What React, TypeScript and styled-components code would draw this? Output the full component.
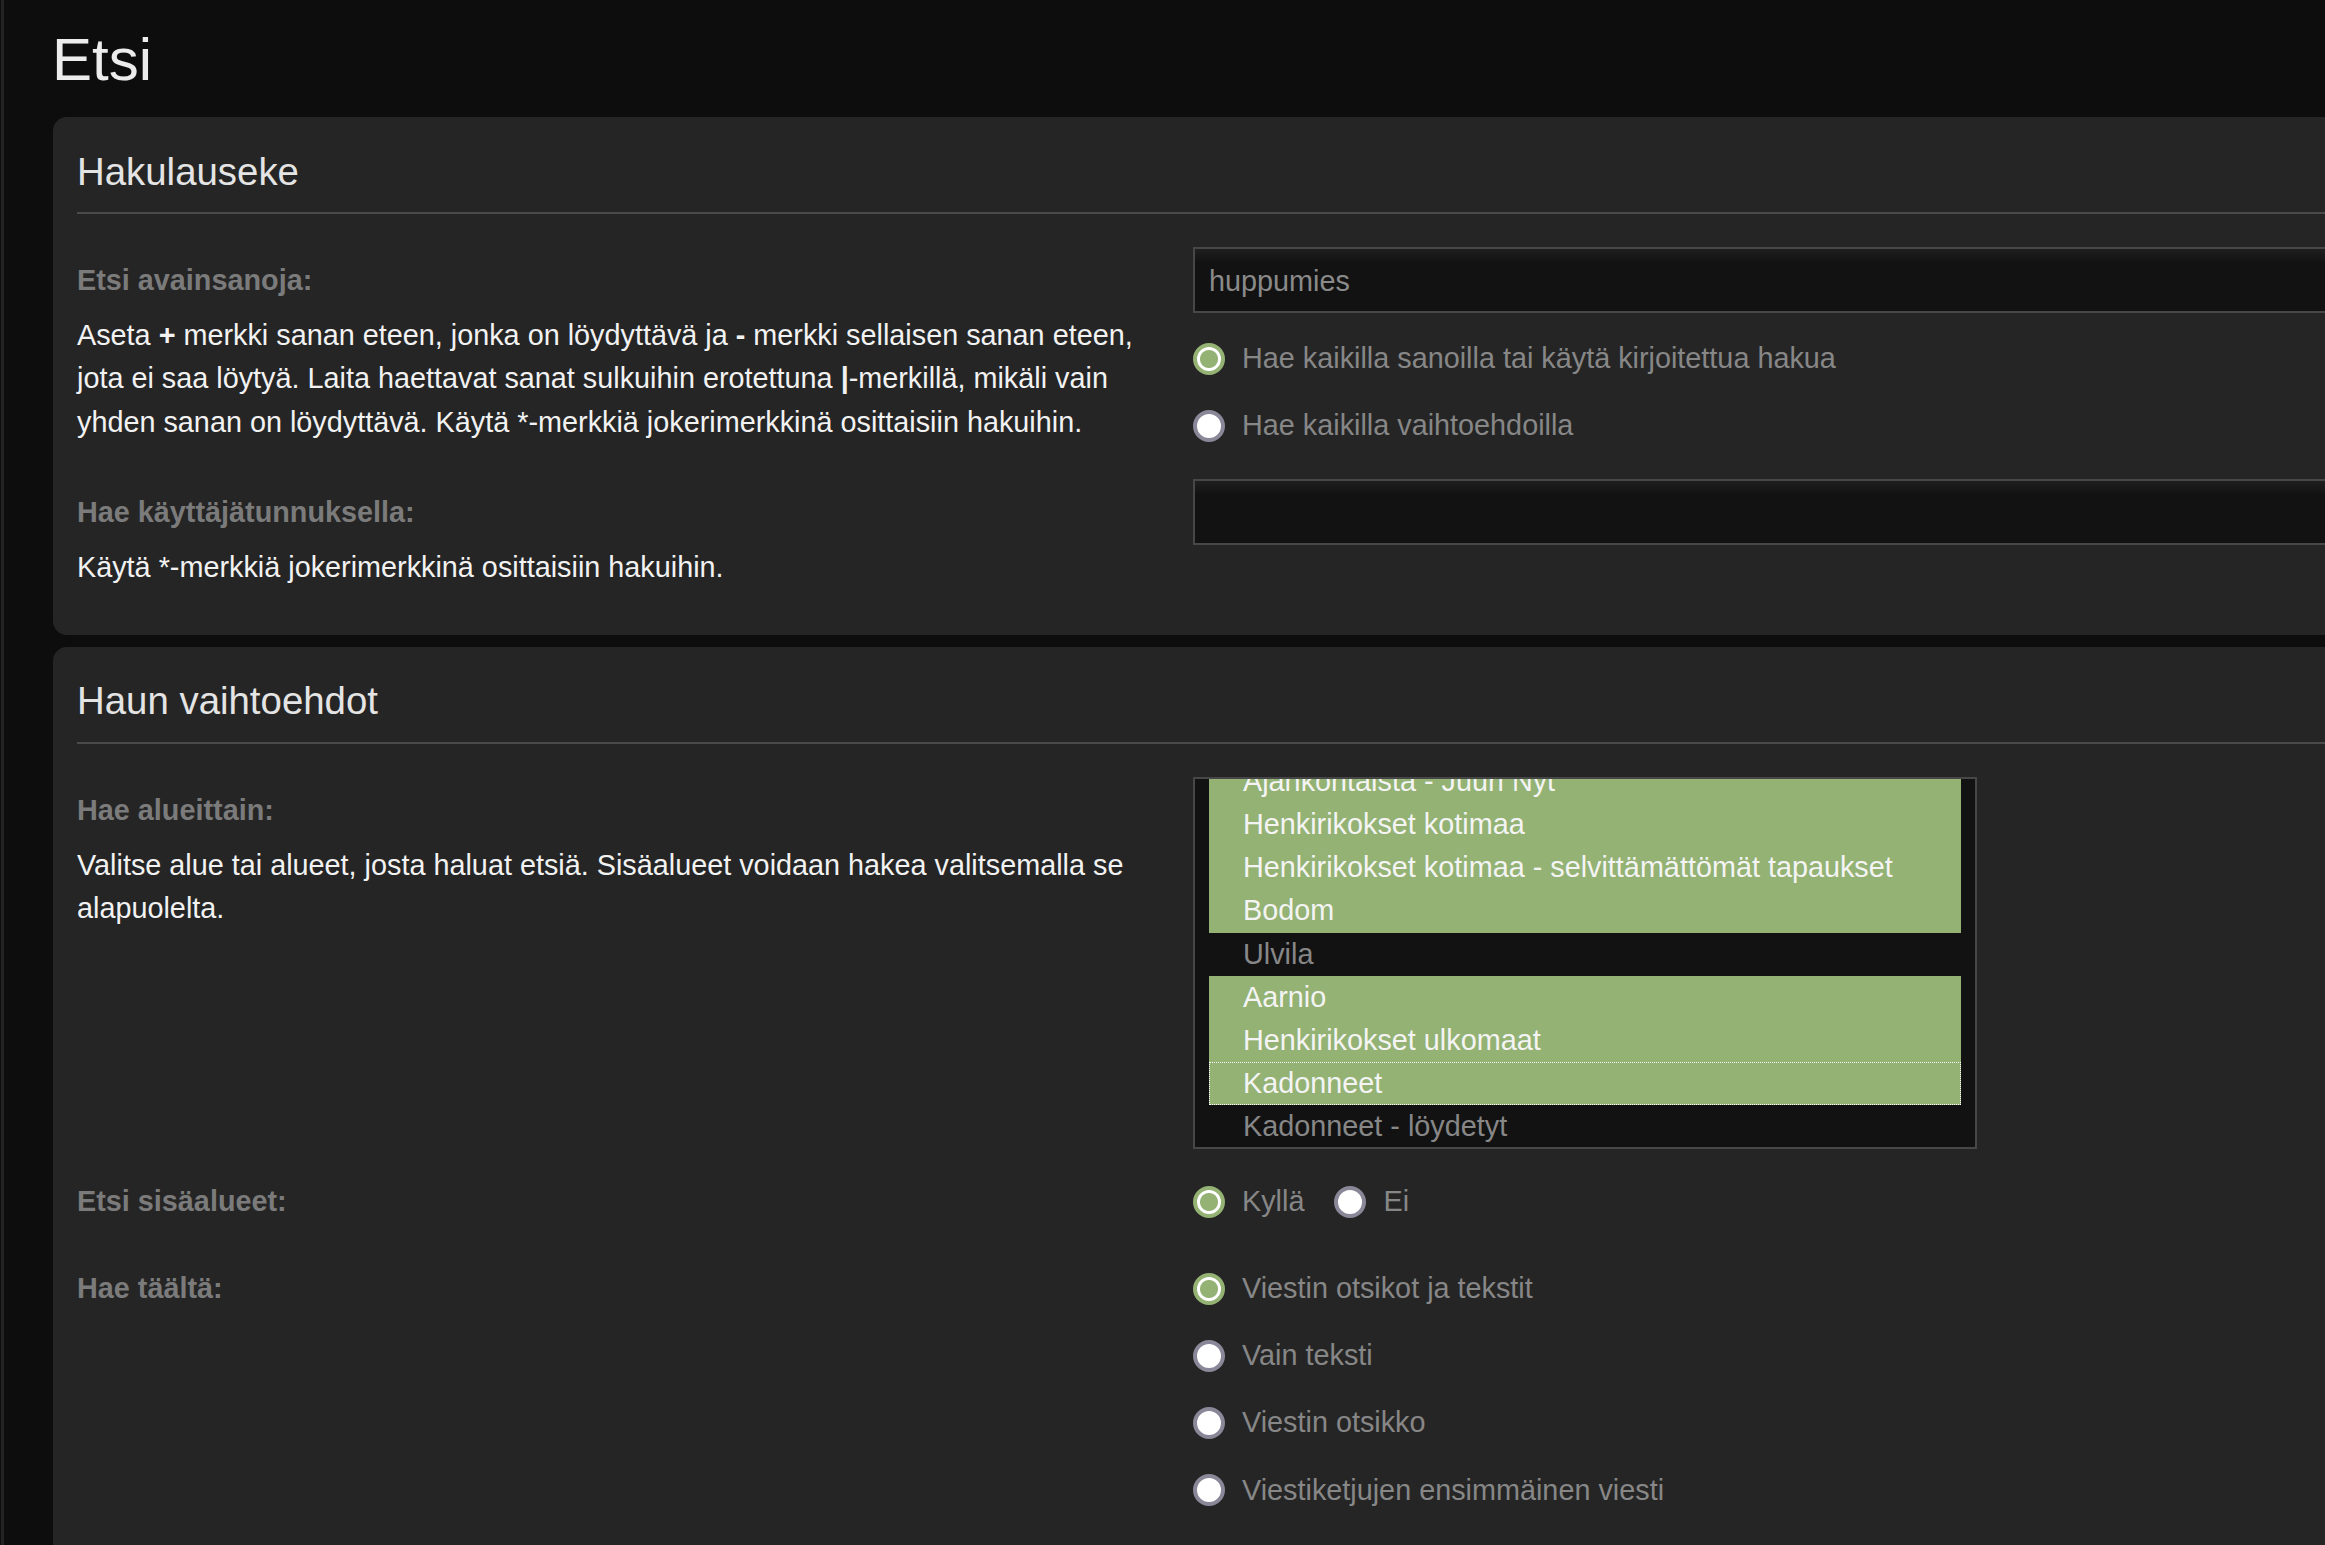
import React, { useLayoutEffect, useRef } from "react";
import styled, { createGlobalStyle } from "styled-components";

const GlobalStyle = createGlobalStyle`
  html, body {
    margin: 0;
    padding: 0;
    background: #0d0d0d;
    overflow: hidden;
  }
  body {
    font-family: "Liberation Sans", Arial, Helvetica, sans-serif;
  }
  *, *::before, *::after {
    box-sizing: border-box;
  }
`;

const Frame = styled.div`
  margin-left: 1px;
  border-left: 3px solid #232323;
  width: 2800px;
  min-height: 1545px;
  padding: 24px 0 0 49px;
`;

const PageTitle = styled.h1`
  margin: 0 0 21px -1px;
  font-size: 60px;
  line-height: 72px;
  font-weight: 400;
  color: #ececec;
`;

const Panel = styled.section`
  background: #252525;
  border-radius: 14px;
  padding: 31.5px 24px 26px;
  margin-bottom: 12px;
`;

const PanelTitle = styled.h2`
  margin: 0;
  font-size: 38.4px;
  line-height: 45px;
  font-weight: 400;
  color: #e4e4e4;
  padding-bottom: 18.5px;
  border-bottom: 2px solid #4a4a4a;
`;

const Rows = styled.div`
  padding-top: 33px;
`;

const Row = styled.div`
  display: grid;
  grid-template-columns: 1116px 1fr;
  padding-bottom: 19.5px;
`;

const Term = styled.div`
  padding: 12px 40px 0 0;
`;

const Label = styled.label`
  display: block;
  margin: 0 0 12px;
  font-size: 28.8px;
  line-height: 43.2px;
  font-weight: 700;
  color: #7b7b7b;
`;

const Explain = styled.p`
  margin: 0;
  font-size: 28.8px;
  line-height: 43.2px;
  color: #f2f2f2;
  b {
    font-weight: 700;
  }
`;

const Field = styled.div`
  min-width: 0;
`;

const TextInput = styled.input`
  display: block;
  width: 100%;
  height: 66px;
  margin: 0 0 12px;
  padding: 2px 14px 0;
  border: 2px solid #474747;
  border-radius: 0;
  background: linear-gradient(#1f1f1f, #121212 14px);
  color: #8a8a8a;
  font-family: inherit;
  font-size: 28.8px;
  outline: none;
`;

const RadioStack = styled.div<{ $inline?: boolean }>`
  display: flex;
  flex-direction: ${(p) => (p.$inline ? "row" : "column")};
  gap: ${(p) => (p.$inline ? "30px" : "24px")};
  padding: 12px 0;
`;

const RadioItem = styled.label`
  display: flex;
  align-items: center;
  gap: 17px;
  height: 43.2px;
  font-size: 28.8px;
  line-height: 43.2px;
  color: #878787;
  white-space: nowrap;
`;

const RadioMark = styled.input.attrs({ type: "radio" })`
  appearance: none;
  -webkit-appearance: none;
  flex: none;
  width: 32px;
  height: 32px;
  margin: 0;
  border-radius: 50%;
  border: 4px solid #8a8898;
  background: #ffffff;
  &:checked {
    border-color: #93b273;
    background: radial-gradient(circle at center, #93b273 8.5px, #ffffff 9.5px);
  }
`;

const ListBox = styled.div`
  width: 784px;
  height: 372px;
  border: 2px solid #474747;
  background: #121212;
  padding: 0 14px;
  overflow-y: auto;
  scrollbar-width: none;
  &::-webkit-scrollbar {
    display: none;
  }
`;

const Option = styled.div<{ $selected: boolean; $focused?: boolean }>`
  position: relative;
  height: 43.2px;
  padding: 0 34px;
  font-size: 28.8px;
  line-height: 43.2px;
  white-space: nowrap;
  background: ${(p) => (p.$selected ? "#93b273" : "transparent")};
  color: ${(p) => (p.$selected ? "#f4f4f4" : "#878787")};
  &::after {
    content: "";
    display: ${(p) => (p.$focused ? "block" : "none")};
    position: absolute;
    inset: 0;
    border: 1px dotted #ffffff;
    pointer-events: none;
  }
`;

const forums = [
  { name: "Ajankohtaista - Juuri Nyt", selected: true },
  { name: "Henkirikokset kotimaa", selected: true },
  { name: "Henkirikokset kotimaa - selvittämättömät tapaukset", selected: true },
  { name: "Bodom", selected: true },
  { name: "Ulvila", selected: false },
  { name: "Aarnio", selected: true },
  { name: "Henkirikokset ulkomaat", selected: true },
  { name: "Kadonneet", selected: true, focused: true },
  { name: "Kadonneet - löydetyt", selected: false },
];

function ForumList() {
  const ref = useRef<HTMLDivElement>(null);
  useLayoutEffect(() => {
    if (ref.current) ref.current.scrollTop = 19;
  }, []);
  return (
    <ListBox ref={ref} role="listbox" aria-multiselectable="true">
      {forums.map((f) => (
        <Option key={f.name} role="option" aria-selected={f.selected} $selected={f.selected} $focused={f.focused}>
          {f.name}
        </Option>
      ))}
    </ListBox>
  );
}

export default function App() {
  return (
    <>
      <GlobalStyle />
      <Frame>
        <PageTitle>Etsi</PageTitle>

        <Panel>
          <PanelTitle>Hakulauseke</PanelTitle>
          <Rows>
            <Row>
              <Term>
                <Label htmlFor="keywords">Etsi avainsanoja:</Label>
                <Explain>
                  Aseta <b>+</b> merkki sanan eteen, jonka on löydyttävä ja <b>-</b> merkki sellaisen sanan eteen, jota ei saa löytyä. Laita haettavat sanat sulkuihin erotettuna <b>|</b>-merkillä, mikäli vain yhden sanan on löydyttävä. Käytä *-merkkiä jokerimerkkinä osittaisiin hakuihin.
                </Explain>
              </Term>
              <Field>
                <TextInput id="keywords" defaultValue="huppumies" />
                <RadioStack>
                  <RadioItem>
                    <RadioMark name="terms" defaultChecked />
                    Hae kaikilla sanoilla tai käytä kirjoitettua hakua
                  </RadioItem>
                  <RadioItem>
                    <RadioMark name="terms" />
                    Hae kaikilla vaihtoehdoilla
                  </RadioItem>
                </RadioStack>
              </Field>
            </Row>
            <Row>
              <Term>
                <Label htmlFor="author">Hae käyttäjätunnuksella:</Label>
                <Explain>Käytä *-merkkiä jokerimerkkinä osittaisiin hakuihin.</Explain>
              </Term>
              <Field>
                <TextInput id="author" />
              </Field>
            </Row>
          </Rows>
        </Panel>

        <Panel>
          <PanelTitle>Haun vaihtoehdot</PanelTitle>
          <Rows>
            <Row>
              <Term>
                <Label>Hae alueittain:</Label>
                <Explain>Valitse alue tai alueet, josta haluat etsiä. Sisäalueet voidaan hakea valitsemalla se alapuolelta.</Explain>
              </Term>
              <Field>
                <ForumList />
              </Field>
            </Row>
            <Row>
              <Term>
                <Label>Etsi sisäalueet:</Label>
              </Term>
              <Field>
                <RadioStack $inline>
                  <RadioItem>
                    <RadioMark name="sc" defaultChecked />
                    Kyllä
                  </RadioItem>
                  <RadioItem>
                    <RadioMark name="sc" />
                    Ei
                  </RadioItem>
                </RadioStack>
              </Field>
            </Row>
            <Row>
              <Term>
                <Label>Hae täältä:</Label>
              </Term>
              <Field>
                <RadioStack>
                  <RadioItem>
                    <RadioMark name="sf" defaultChecked />
                    Viestin otsikot ja tekstit
                  </RadioItem>
                  <RadioItem>
                    <RadioMark name="sf" />
                    Vain teksti
                  </RadioItem>
                  <RadioItem>
                    <RadioMark name="sf" />
                    Viestin otsikko
                  </RadioItem>
                  <RadioItem>
                    <RadioMark name="sf" />
                    Viestiketjujen ensimmäinen viesti
                  </RadioItem>
                </RadioStack>
              </Field>
            </Row>
          </Rows>
        </Panel>
      </Frame>
    </>
  );
}
